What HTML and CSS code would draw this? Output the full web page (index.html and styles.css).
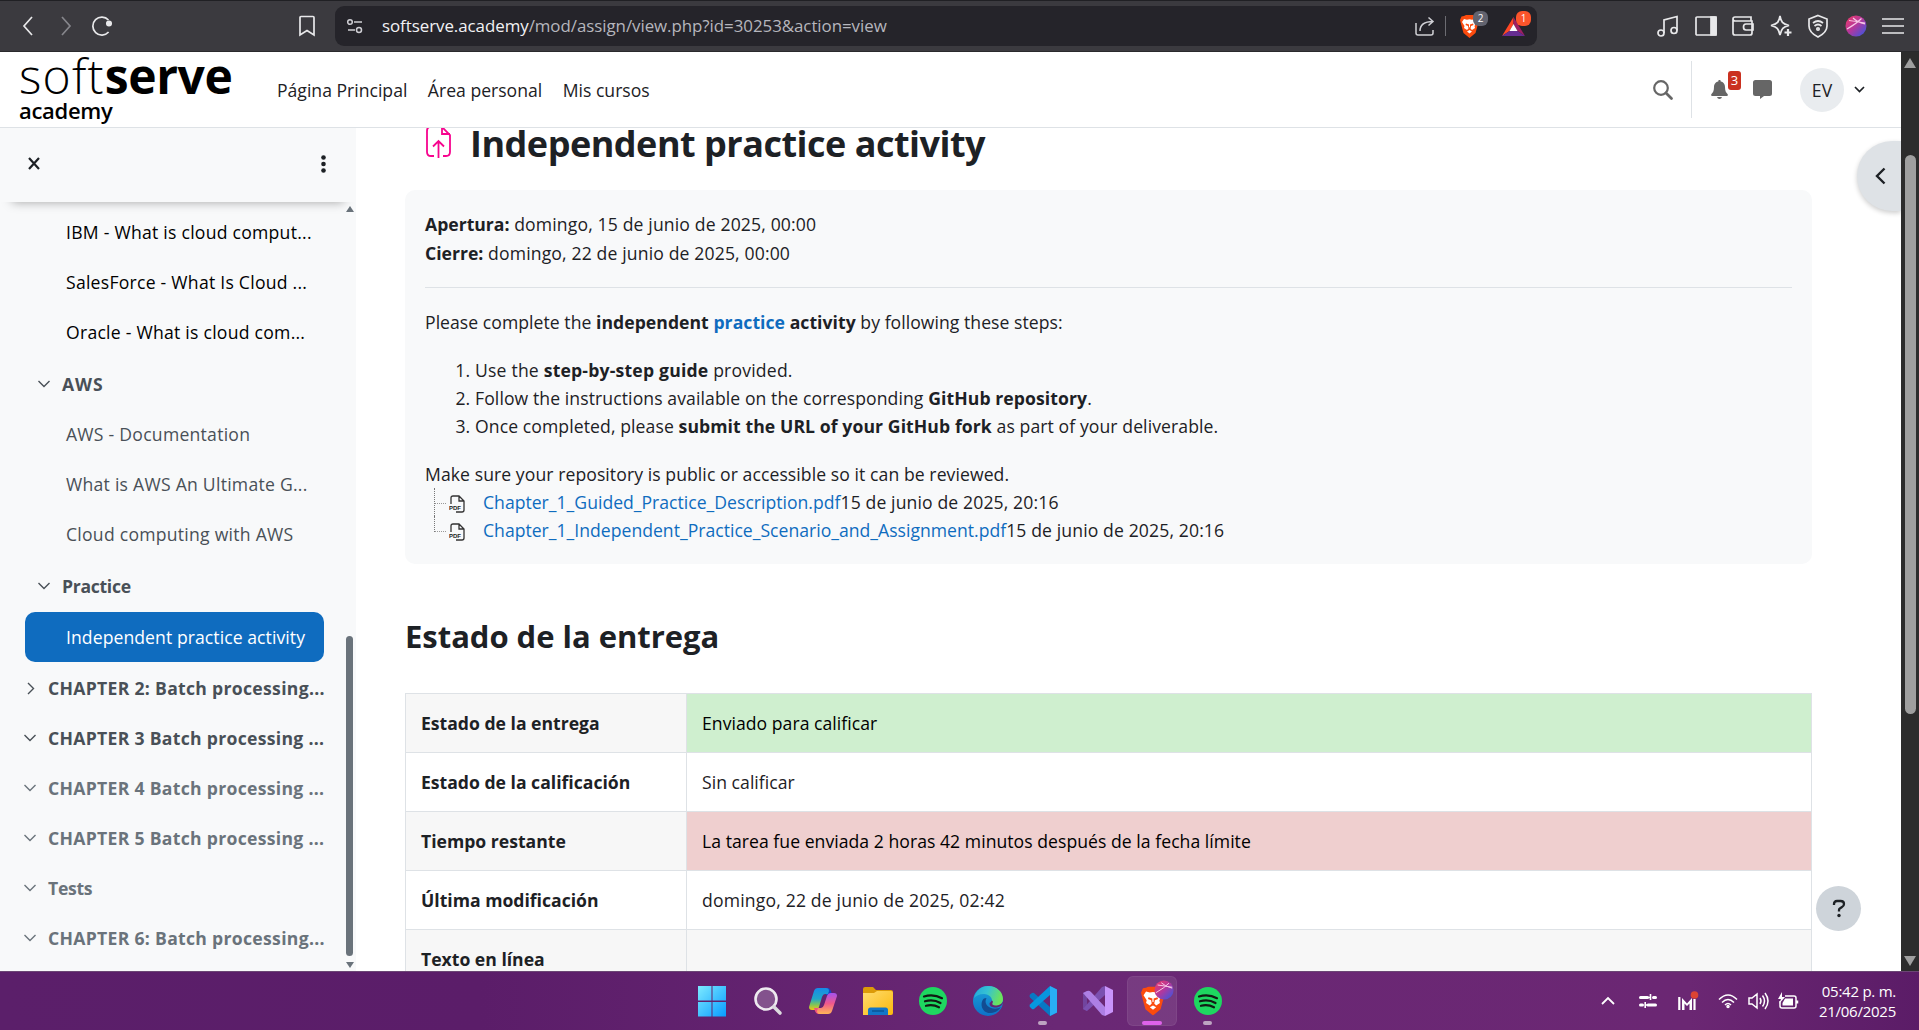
FILE: index.html
```html
<!DOCTYPE html>
<html lang="es">
<head>
<meta charset="utf-8">
<title>Independent practice activity</title>
<link rel="stylesheet" href="styles.css">
</head>
<body>
<div class="screen">
  <div class="browser">
    <div class="nav-btns">
      <svg width="12" height="20" viewBox="0 0 12 20" class="ln"><path d="M10 1 2 10l8 9"/></svg>
      <svg width="12" height="20" viewBox="0 0 12 20" class="ln dim"><path d="M2 1l8 9-8 9"/></svg>
      <svg width="22" height="22" viewBox="0 0 22 22" class="ln reload"><path d="M17.600 17A9 9 0 1 1 17.500 5"/><circle cx="18" cy="8.500" r="2.200" fill="#e8e8ea"/></svg>
    </div>
    <svg class="bookmark ln" width="18" height="22" viewBox="0 0 18 22"><path d="M3 1.500h12a1 1 0 0 1 1 1V20l-7-4.500L2 20V2.500a1 1 0 0 1 1-1Z"/></svg>
    <div class="url">
      <svg width="18" height="18" viewBox="0 0 18 18" class="ln"><circle cx="4" cy="5" r="2.300"/><path d="M8 5h8M2 13h7"/><circle cx="13" cy="13" r="2.500"/></svg>
      <span class="address"><b>softserve.academy</b>/mod/assign/view.php?id=30253&amp;action=view</span>
      <svg class="share ln" width="20" height="20" viewBox="0 0 20 20"><path d="M1 7v10q0 2 2 2h13q2 0 2-2v-3M5 15C5 8 10 5.500 18 5.500M13.500 1.500l4.500 4-4.500 4"/></svg>
      <i class="sep"></i>
      <span class="ext"><svg width="19" height="23" viewBox="0 0 19 23"><use href="#lion"/></svg><em class="n2">2</em></span>
      <span class="ext bat"><svg width="23" height="19" viewBox="0 0 23 19"><path d="M11.500 0 0 19l7.500-5 4-7Z" fill="#ff4724"/><path d="M11.500 0 23 19l-7.500-5-4-7Z" fill="#9e1f63"/><path d="M0 19h23l-7.500-5h-8Z" fill="#662d91"/><path d="m11.500 7 4 7h-8Z" fill="#fff"/></svg><em class="n1">1</em></span>
    </div>
    <div class="tools">
      <svg width="22" height="22" viewBox="0 0 22 22" class="ln"><circle cx="4" cy="18" r="3"/><circle cx="17" cy="15.500" r="3"/><path d="M7 18V5l13-3.500v14M7 9"/></svg>
      <svg width="22" height="22" viewBox="0 0 22 22" class="ln"><rect x="1" y="2" width="20" height="18" rx="1"/><path d="M16 2h5v18h-5Z" fill="#e8e8ea"/></svg>
      <svg width="22" height="22" viewBox="0 0 22 22" class="ln"><path d="M19 6V2H3Q1 2 1 4v14q0 2 2 2h15q2 0 2-2V6H3Q1 6 1 4M21 9h-7q-2.500 0-2.500 3t2.500 3h7Z"/></svg>
      <svg width="22" height="22" viewBox="0 0 22 22" class="ln"><path d="M10 1c1 6 2.500 8 9 9.500-6 1.500-7.500 3-9 9.500-1.500-6.500-3-8-9-9.500C7.500 9 9 7 10 1Z"/><path d="M18 14v7M14.500 17.500h7" stroke-width="2.200"/></svg>
      <svg width="22" height="24" viewBox="0 0 22 24" class="ln"><path d="M11 1.500 20 5v7c0 5-3 8-9 11-6-3-9-6-9-11V5Z"/><path d="M6 9q5-4 10 0M7.500 12q3.500-3 7 0"/><circle cx="11" cy="15" r="1.200"/></svg>
      <svg width="22" height="22" viewBox="0 0 22 22"><use href="#orb"/></svg>
      <svg width="22" height="20" viewBox="0 0 22 20" class="ln"><path d="M0 3h22M0 10h22M0 17h22"/></svg>
    </div>
  </div>

  <div class="page">
    <div class="site">
      <header class="top">
        <div class="logo"><div class="brand"><span>soft</span><b>serve</b></div><div class="acad">academy</div></div>
        <nav><a>Página Principal</a><a>Área personal</a><a>Mis cursos</a></nav>
        <div class="user">
          <svg width="20" height="20" viewBox="0 0 20 20" fill="none" stroke="#666"><circle cx="8" cy="8" r="6.800" stroke-width="2.200"/><path d="m13 13 5.500 5.500" stroke-width="2.800" stroke-linecap="round"/></svg>
          <i class="vline"></i>
          <span class="bell"><svg width="17" height="19" viewBox="0 0 17 19" fill="#666"><path d="M8.500 0c.8 0 1.200.5 1.200 1.400C13 2.200 14 4.500 14 7c0 4 1 5.500 2.500 7 .8.900.4 2-.6 2H1.100c-1 0-1.400-1.100-.6-2C2 12.500 3 11 3 7c0-2.500 1-4.800 4.300-5.600C7.300.5 7.700 0 8.500 0ZM6 17h5q-.5 2-2.500 2T6 17Z"/></svg><em>3</em></span>
          <svg class="chat" width="19" height="19" viewBox="0 0 19 19"><path d="M2.500 0h14Q19 0 19 2.500v11q0 2.500-2.500 2.500H11l-4 3v-3H2.500Q0 16 0 13.500v-11Q0 0 2.500 0Z" fill="#666"/></svg>
          <span class="avatar">EV</span>
          <svg width="11" height="7" viewBox="0 0 11 7" fill="none" stroke="#1d2125" stroke-width="1.700"><path d="m1 1 4.500 4.500L10 1"/></svg>
        </div>
      </header>
      <div class="body">
        <aside>
          <div class="drawer-head">
            <svg width="12" height="13" viewBox="0 0 12 13" stroke="#1d2125" stroke-width="2.200"><path d="m1 1 10 11M11 1 1 12"/></svg>
            <svg width="5" height="18" viewBox="0 0 5 18" fill="#1d2125"><circle cx="2.500" cy="2.500" r="2.300"/><circle cx="2.500" cy="9" r="2.300"/><circle cx="2.500" cy="15.500" r="2.300"/></svg>
          </div>
          <div class="index">
            <ul>
              <li class="item">IBM - What is cloud comput...</li>
              <li class="item">SalesForce - What Is Cloud ...</li>
              <li class="item">Oracle - What is cloud com...</li>
              <li class="sub wide"><svg class="chev"><use href="#down"/></svg>AWS</li>
              <li class="item mut">AWS - Documentation</li>
              <li class="item mut">What is AWS An Ultimate G...</li>
              <li class="item mut">Cloud computing with AWS</li>
              <li class="sub tight"><svg class="chev"><use href="#down"/></svg>Practice</li>
              <li class="item active">Independent practice activity</li>
              <li class="chap"><svg class="chev"><use href="#right"/></svg><span>CHAPTER 2: Batch processing...</span></li>
              <li class="chap"><svg class="chev"><use href="#down"/></svg><span>CHAPTER 3 Batch processing ...</span></li>
              <li class="chap dimmed"><svg class="chev"><use href="#down"/></svg><span>CHAPTER 4 Batch processing ...</span></li>
              <li class="chap dimmed"><svg class="chev"><use href="#down"/></svg><span>CHAPTER 5 Batch processing ...</span></li>
              <li class="chap dimmed tight"><svg class="chev"><use href="#down"/></svg><span>Tests</span></li>
              <li class="chap dimmed"><svg class="chev"><use href="#down"/></svg><span>CHAPTER 6: Batch processing...</span></li>
            </ul>
            <div class="mini-scroll"><i class="up"></i><i class="thumb"></i><i class="dn"></i></div>
          </div>
        </aside>
        <main>
          <div class="title">
            <svg width="25" height="31" viewBox="0 0 25 31" fill="none" stroke="#f7038e" stroke-width="1.800"><path d="M8 29H5q-4 0-4-4V4q0-4 3-4h12l8 8v17q0 4-4 4h-3M16 0v7h8M12.500 31V14M7 19.500l5.500-5.500 5.500 5.500"/></svg>
            <h1>Independent practice activity</h1>
          </div>
          <section class="card">
            <div class="dates"><div><b>Apertura:</b> domingo, 15 de junio de 2025, 00:00</div><div><b>Cierre:</b> domingo, 22 de junio de 2025, 00:00</div></div>
            <p class="lead">Please complete the <b>independent <a>practice</a> activity</b> by following these steps:</p>
            <ol>
              <li class="l1">Use the <b>step-by-step guide</b> provided.</li>
              <li>Follow the instructions available on the corresponding <b>GitHub repository</b>.</li>
              <li>Once completed, please <b>submit the URL of your GitHub fork</b> as part of your deliverable.</li>
            </ol>
            <div class="note">Make sure your repository is public or accessible so it can be reviewed.</div>
            <div class="file"><i class="branch"></i><svg width="16" height="18"><use href="#pdf"/></svg><a>Chapter_1_Guided_Practice_Description.pdf</a><span>15 de junio de 2025, 20:16</span></div>
            <div class="file"><i class="branch"></i><svg width="16" height="18"><use href="#pdf"/></svg><a>Chapter_1_Independent_Practice_Scenario_and_Assignment.pdf</a><span>15 de junio de 2025, 20:16</span></div>
          </section>
          <h2>Estado de la entrega</h2>
          <table>
            <tr><th>Estado de la entrega</th><td class="ok">Enviado para calificar</td></tr>
            <tr><th>Estado de la calificación</th><td>Sin calificar</td></tr>
            <tr><th>Tiempo restante</th><td class="late">La tarea fue enviada 2 horas 42 minutos después de la fecha límite</td></tr>
            <tr><th>Última modificación</th><td class="when">domingo, 22 de junio de 2025, 02:42</td></tr>
            <tr><th>Texto en línea</th><td></td></tr>
          </table>
        </main>
      </div>
      <div class="drawer-toggle"><svg width="11" height="18" viewBox="0 0 11 18" fill="none" stroke="#1d2125" stroke-width="2.400"><path d="M9.500 1.500 2 9l7.500 7.500"/></svg></div>
      <div class="help"><svg width="14" height="19" viewBox="0 0 14 19" fill="none" stroke="#1d2125" stroke-width="2.300"><path d="M2 6V5q0-3 3-3h3.500Q12 2 12 5q0 2-2 3L7.800 9.500Q7 10 7 11v1.500"/><circle cx="7" cy="16.500" r="1.700" fill="#1d2125" stroke="none"/></svg></div>
    </div>
    <div class="page-scroll"><i class="up"></i><i class="thumb"></i><i class="dn"></i></div>
  </div>

  <footer class="taskbar">
    <div class="apps">
      <span class="app start"><svg width="30" height="31" viewBox="0 0 30 31" fill="url(#win)"><path d="M1 0h13.500v14.500H1ZM15.500 0H29v14.500H15.500ZM1 16h13.500v14.500H1ZM15.500 16H29v14.500H15.500Z"/></svg></span>
      <span class="app"><svg width="30" height="30" viewBox="0 0 30 30"><circle cx="13" cy="13" r="10.500" fill="#83528d" stroke="#eeeaf0" stroke-width="2.600"/><path d="m21 21 6 6" stroke="#dcdade" stroke-width="3.600" stroke-linecap="round"/></svg></span>
      <span class="app"><svg width="30" height="30" viewBox="0 0 30 30"><path d="M18 2h2q2 0 3 3l1 4h-6Z" fill="#1746c4"/><path d="M6 5q1-3 4-3h8q3 0 3 3l-1 3h-3q-2 0-3 3l-3 10q-1 3-4 3H4q-3 0-3-3Z" fill="url(#copA)"/><path d="M12 28h-2q-2 0-3-3l-1-3h7Z" fill="#f0527c"/><path d="M24 25q-1 3-4 3h-8q-3 0-3-3l1-3h3q2 0 3-3l3-9q1-3 4-3h3q3 0 3 3Z" fill="url(#copB)"/></svg></span>
      <span class="app"><svg width="32" height="30" viewBox="0 0 32 30"><path d="M1 3q0-2 2-2h8l3 3h15q2 0 2 2v6H1Z" fill="#dc9b08"/><path d="M1 7h11l3-2h14q2 0 2 2v20q0 2-2 2H1Z" fill="url(#folder)"/><path d="M6 29v-5q0-2.500 2.500-2.500h15Q26 21.500 26 24v5Z" fill="#1276c8"/><path d="M10 25h12" stroke="#08518f" stroke-width="1.300"/></svg></span>
      <span class="app"><svg width="30" height="30"><use href="#spotify"/></svg></span>
      <span class="app"><svg width="30" height="30" viewBox="0 0 30 30"><circle cx="15" cy="15" r="15" fill="url(#edgeB)"/><path d="M1 12C3 4 9 0 15 0c9 0 15 6 15 13 0 5-4 7-8 7-3 0-4.500-1.200-3-3.500C20 12 16 8 11 8 6 8 3 10 1 12Z" fill="url(#edgeG)"/><path d="M11 12.500C6 17 9 28 18 27c5-.5 8-3 10-6-3 2-7 2-10 1-4-1.500-7-5-4.500-10Z" fill="#134c91"/><path d="M30.500 14c0 5-4 7.500-8 7.500-3 0-6-1-6-4 0-1 2-1.500 2-3 1 0 2 1 1 2.500-.8 1.500.5 2.500 3 2.500 4 0 7-1.500 8-5.500Z" fill="#652472"/></svg></span>
      <span class="app run"><svg width="30" height="30" viewBox="0 0 30 30"><path d="m22 0 7 3.500v23L22 30 2 11.500q-1-1.500 0-3L4 7q1-.5 2 0l16 14Z" fill="#0878c4"/><path d="M22 9 6 23q-1 .5-2 0l-2-2q-1-1 0-2.500L22 0Z" fill="#0797df"/><path d="m22 0 7 3.500v23L22 30Z" fill="#29aef5"/></svg></span>
      <span class="app"><svg width="30" height="30" viewBox="0 0 30 30"><path d="M0 7 4 5v20l-4-2Z" fill="#71459e"/><path d="M4 25 0 23 19 1l3-1v9Z" fill="#7b50b0"/><path d="M4 5 0 7l19 22 3 1v-9L8 6Q6 4 4 5Z" fill="#ad7fe4"/><path d="m22 0 8 4v22l-8 4Z" fill="#c994fb"/></svg></span>
      <span class="app current"><svg width="24" height="30" viewBox="0 0 19 23"><use href="#lion"/></svg><svg class="profile" width="20" height="20" viewBox="0 0 22 22"><use href="#orb"/></svg></span>
      <span class="app run"><svg width="30" height="30"><use href="#spotify"/></svg></span>
    </div>
    <div class="tray">
      <svg class="k1" width="14" height="10" viewBox="0 0 14 10"><path d="m1 8 6-6 6 6" stroke-width="1.800"/></svg>
      <svg class="k2" width="18" height="16" viewBox="0 0 18 16"><path d="M1.500 4.500h7M14.500 4.500h2M1.500 12h2M9 12h7.500" stroke-width="3" stroke-linecap="round"/><path d="M11.500 1v6M6.200 9v6M8 4.500h4M6 12h4" stroke-width="1.600"/></svg>
      <svg class="k3" width="21" height="20" viewBox="0 0 21 20"><path d="M2.300 6v13M17.500 8v11" stroke-width="2.200"/><path d="M5 19V7l5 5.500L15 7v12h-2.500v-6.500L10 15l-2.500-2.500V19Z" fill="#fff" stroke="none"/><circle cx="17.500" cy="4" r="3.800" fill="#dc4433" stroke="none"/></svg>
      <svg class="k4" width="20" height="16" viewBox="0 0 20 16"><path d="M1 6.500q9-9 18 0M4 9.500q6-6 12 0M7 12q3-3 6 0"/><circle cx="10" cy="13.500" r="1"/></svg>
      <svg class="k5" width="21" height="18" viewBox="0 0 21 18"><path d="M1 6h3l5-4v14l-5-4H1ZM12 6q2 3 0 6M14.500 3.500q4 5.500 0 11M17 1q6 8 0 16"/></svg>
      <svg class="k6" width="21" height="18" viewBox="0 0 21 18"><path d="M7 4h9q2 0 2 2v8q0 2-2 2H4q-2 0-2-2V9M19.500 8.500v3"/><path d="M7 6.500h8v7H4.500V11Z" fill="#fff" stroke="none"/><path d="M4 0 0 7h3L1 12l6-7H4Z" fill="#fff" stroke="none"/></svg>
      <div class="clock"><span>05:42 p. m.</span><span>21/06/2025</span></div>
    </div>
  </footer>
</div>

<svg width="0" height="0" class="defs">
  <defs>
    <linearGradient id="win" x2="1" y2="1"><stop stop-color="#7deaff"/><stop offset="1" stop-color="#079bff"/></linearGradient>
    <linearGradient id="copA" x2="0" y2="1"><stop stop-color="#178be8"/><stop offset=".5" stop-color="#22a7c8"/><stop offset=".75" stop-color="#7cc45c"/><stop offset="1" stop-color="#f2c811"/></linearGradient>
    <linearGradient id="copB" x2="0" y2="1"><stop stop-color="#a452f0"/><stop offset=".5" stop-color="#f0588c"/><stop offset="1" stop-color="#ffb657"/></linearGradient>
    <linearGradient id="folder" x2="1" y2="1"><stop stop-color="#ffdc6e"/><stop offset="1" stop-color="#fbb90e"/></linearGradient>
    <linearGradient id="edgeB" x2="0" y2="1"><stop stop-color="#1ba4d8"/><stop offset="1" stop-color="#0e71c8"/></linearGradient>
    <linearGradient id="edgeG" x2="1" y2=".3"><stop stop-color="#22a5dc"/><stop offset=".5" stop-color="#36c2d3"/><stop offset="1" stop-color="#6be35c"/></linearGradient>
    <linearGradient id="orbG" x2="1" y2="1"><stop stop-color="#f23a64"/><stop offset=".5" stop-color="#b0389f"/><stop offset="1" stop-color="#2c5ae8"/></linearGradient>
    <symbol id="down" viewBox="0 0 14 14"><path d="m1.500 4 5.500 5.500L12.500 4" fill="none" stroke="currentColor" stroke-width="1.400"/></symbol>
    <symbol id="right" viewBox="0 0 14 14"><path d="m5 2 5.500 5.500L5 13" fill="none" stroke="currentColor" stroke-width="1.400"/></symbol>
    <symbol id="lion" viewBox="0 0 19 23"><path d="m4 1 2-1h7l2 1 2.500.5L19 5l-1 4-2.500 9-6 5-6-5L1 9 0 5l1.500-3.500Z" fill="#fb4b0e"/><path d="m4 4 3 .8 2.500-.5 2.500.5L15 4l2 3-2.500 4 .5 2-3 2-1.500-1.500L11 11l2.500-1-.5-1.500-3 1v2.500l-.5.500-.5-.5V9.500l-3-1-.5 1.500L8 11l.5 2.500L7 15l-3-2 .5-2L2 7Zm5.500 11 2.500 1.500-2.500 2-2.500-2Z" fill="#fff"/></symbol>
    <symbol id="orb" viewBox="0 0 22 22"><circle cx="11" cy="11" r="10.500" fill="url(#orbG)"/><path d="M4 5.500q8 1 16 2.500M2 14Q11 9 16.500 3.500M8 3q4 4 12 6" fill="none" stroke="#f7c6e6" stroke-width="1.100"/></symbol>
    <symbol id="pdf" viewBox="0 0 16 18"><path d="M2 9V3q0-2 2-2h6l5 5v9q0 2-2 2H7M10 1v5h5" fill="none" stroke="#333" stroke-width="1.300"/><text x="0" y="14.500" class="pdf-tag">PDF</text></symbol>
    <symbol id="spotify" viewBox="0 0 30 30"><circle cx="15" cy="15" r="14" fill="#1ed760"/><path d="M6 10.500q9.500-2.800 18 1.700M7 15.300q8.500-2.300 15.500 1.700M8 19.800q7-1.700 13 1.500" fill="none" stroke="#121a14" stroke-width="2.200" stroke-linecap="round"/></symbol>
  </defs>
</svg>
</body>
</html>
```
FILE: styles.css
```css
* { box-sizing: border-box; }
body { margin: 0; overflow: hidden; font-family: "Open Sans", "Noto Sans", sans-serif; font-size: 17.6px; line-height: 28.125px; color: #1d2125; background: #fff; }
svg { display: block; flex: none; overflow: visible; }
ul { list-style: none; margin: 0; padding: 0; }
em, i { font-style: normal; }
a { color: #0f6cbf; }
.defs { position: absolute; }
.screen { width: 1919px; height: 1030px; display: flex; flex-direction: column; overflow: hidden; }

/* Browser toolbar */
.browser { height: 52px; flex: none; display: flex; align-items: center; background: #3b3a3f; border-top: 1px solid #202024; border-bottom: 1px solid #29292c; padding-left: 22px; }
.ln { fill: none; stroke: #e8e8ea; stroke-width: 1.7; }
.dim { stroke: #86868c; }
.nav-btns { display: flex; align-items: center; gap: 26px; width: 276px; }
.reload { margin-left: -7px; }
.bookmark { margin-right: 19px; }
.url { width: 1202px; height: 40px; border-radius: 9px; background: #25242a; display: flex; align-items: center; padding-left: 11px; color: #b6b6bd; font-size: 16.9px; }
.url > .ln { stroke: #cfcfd4; stroke-width: 1.5; }
.address { margin-left: 18px; flex: 1; letter-spacing: -.05px; }
.address b { font-weight: 400; color: #f2f2f4; }
.sep { width: 1px; height: 20px; background: #6c6c72; margin: 0 14px 0 10px; }
.ext { position: relative; margin-right: 23px; }
.ext.bat { margin-right: 12px; }
.ext em { position: absolute; top: -4px; left: 13px; width: 15px; height: 15px; border-radius: 6px; background: #62636f; color: #fff; font-size: 10px; line-height: 15px; text-align: center; }
.ext .n1 { background: #fb542b; left: 14px; top: -6px; }
.tools { display: flex; align-items: center; gap: 15.5px; margin-left: 120px; }

/* Site */
.page { height: 919px; flex: none; display: flex; }
.site { width: 1901px; position: relative; display: flex; flex-direction: column; }
.top { height: 76px; flex: none; border-bottom: 1px solid #dee2e6; display: flex; align-items: center; padding: 0 36px 0 19px; }
.logo { width: 258px; color: #000; align-self: flex-start; }
.brand { font-size: 48px; line-height: 47px; height: 44px; display: flex; }
.brand span { font-weight: 350; letter-spacing: 1.2px; }
.brand b { font-weight: 700; letter-spacing: -.4px; }
.acad { font-size: 22px; line-height: 28px; font-weight: 600; letter-spacing: -.3px; }
nav { display: flex; flex: 1; gap: 20.5px; padding-top: 2px; }
nav a { color: #1d2125; }
.user { display: flex; align-items: center; height: 100%; }
.vline { width: 1px; height: 57px; background: #dee2e6; margin: 0 19px 0 18px; }
.bell { position: relative; }
.bell em { position: absolute; left: 17px; top: -9px; width: 13px; height: 19px; border-radius: 3px; background: #ca3120; color: #fff; font-size: 13px; line-height: 19px; text-align: center; }
.chat { margin: 0 28px 0 25px; }
.avatar { width: 44px; height: 44px; border-radius: 50%; background: #e9ecef; line-height: 45px; text-align: center; margin-right: 10px; }
.body { height: 843px; display: flex; overflow: hidden; }

/* Course index */
aside { width: 356px; background: #f8f9fa; display: flex; flex-direction: column; overflow: hidden; }
.drawer-head { height: 74px; flex: none; display: flex; justify-content: space-between; padding: 29px 30px 0 28px; background: #f8f9fa; box-shadow: 0 12px 10px -12px rgba(0,0,0,.35); z-index: 1; }
.drawer-head svg:last-child { margin-top: -2px; }
.index { flex: 1; display: flex; padding: 5px 2px 0 25px; }
.index ul { width: 299px; }
.index li { height: 50px; display: flex; align-items: center; white-space: nowrap; }
.item { padding-left: 41px; color: #000; letter-spacing: .25px; }
.item.mut { color: #495057; }
.index .sub { height: 52px; padding-top: 2px; padding-left: 14px; gap: 11px; font-weight: 700; color: #495057; }
.index .active { background: #0f6cbf; color: #fff; border-radius: 10px; margin: 1px 0; letter-spacing: .07px; }
.chap { gap: 11px; font-weight: 700; color: #495057; letter-spacing: .3px; }
.dimmed { color: #6a737b; }
.wide { letter-spacing: .9px; }
.tight { letter-spacing: -.3px; }
.chev { width: 14px; height: 14px; margin-left: -2px; }
.mini-scroll { width: 7px; margin-left: 22px; display: flex; flex-direction: column; justify-content: space-between; align-items: center; margin-top: -1px; padding-bottom: 3px; }
.mini-scroll .thumb { width: 7px; height: 320px; border-radius: 4px; background: #6a737b; margin-top: auto; margin-bottom: 6px; }
.up, .dn { border: 4.500px solid transparent; width: 0; height: 0; }
.up { border-bottom: 6px solid #6a737b; border-top: 0; }
.dn { border-top: 6px solid #6a737b; border-bottom: 0; }

/* Activity */
main { width: 1407px; margin-left: 49px; flex: none; }
.title { height: 62px; display: flex; padding-left: 21px; gap: 19px; }
.title svg { margin-top: -1px; }
h1 { margin: -2px 0 0; font-size: 36px; line-height: 36px; letter-spacing: -.5px; white-space: nowrap; }
.card { height: 374px; background: #f8f9fa; border-radius: 10px; padding: 20px; }
.dates { height: 78px; border-bottom: 1px solid #dee2e6; line-height: 29px; }
.dates div { letter-spacing: .14px; }
.dates b { letter-spacing: 0; }
.card p { margin: 20px 0; }
.lead { letter-spacing: .045px; }
ol { margin: 0 0 19px; padding-left: 50px; letter-spacing: .09px; }
.l1 { letter-spacing: .19px; }
.note { letter-spacing: .075px; }
.file { display: flex; align-items: center; height: 28px; }
.file a { letter-spacing: .01px; }
.file span { letter-spacing: .12px; }
.branch { width: 13px; height: 28px; margin: 0 3px 0 9px; border-left: 1px dotted #777; background: linear-gradient(90deg, #999 50%, transparent 0) 0 15px / 2px 1px repeat-x; }
.file:last-child .branch { height: 16px; align-self: flex-start; }
.file svg { margin: 5px 18px 0 -1px; }
.pdf-tag { font: 700 6px "Liberation Sans", sans-serif; fill: #222; }
h2 { margin: 52px 0 37px; font-size: 31px; line-height: 40px; letter-spacing: -.03px; }
table { width: 1407px; border-collapse: collapse; table-layout: fixed; }
th, td { height: 59px; border: 1px solid #dee2e6; padding: 0 15px; text-align: left; letter-spacing: .04px; }
th { width: 281px; letter-spacing: 0; }
tr:nth-child(odd) { background: #f7f7f7; }
td.ok { background: #cfefcf; color: #000; }
td.late { background: #efcfcf; color: #000; }
td.when { letter-spacing: .17px; }

.drawer-toggle { position: absolute; right: 0; top: 89px; width: 44px; height: 70px; border-radius: 35px 0 0 35px; background: #dee2e6; box-shadow: 0 2px 5px rgba(0,0,0,.2); clip-path: inset(-10px 0 -10px -10px); padding: 26px 0 0 18px; }
.help { position: absolute; right: 40px; bottom: 40px; width: 45px; height: 45px; border-radius: 50%; background: #ced4da; display: grid; place-items: center; }
.page-scroll { width: 18px; background: #2c2c2c; display: flex; flex-direction: column; align-items: center; padding: 6px 0 5px; }
.page-scroll .up, .page-scroll .dn { border-left-width: 6px; border-right-width: 6px; }
.page-scroll .up { border-bottom: 10px solid #9f9f9f; }
.page-scroll .dn { border-top: 10px solid #9f9f9f; margin-top: auto; }
.page-scroll .thumb { width: 11px; height: 559px; margin-top: 87px; background: #9f9f9f; border-radius: 6px; }

/* Taskbar */
.taskbar { height: 59px; display: flex; align-items: center; justify-content: space-between; padding: 0 23px 0 685px; border-top: 1px solid #6b4674; background: linear-gradient(90deg, #5b1f6a, #5b1d69 25%, #6a2875 55%, #6b2773 88%, #5b1c67); color: #fff; }
.apps { display: flex; }
.app { width: 55px; height: 58px; display: grid; place-items: center; position: relative; }
.start { padding-right: 2px; }
.run::after, .current::after { content: ""; position: absolute; bottom: 5px; left: 23px; width: 9px; height: 4px; border-radius: 2px; background: #bda4c1; }
.current::before { content: ""; position: absolute; inset: 4px 3px 4px 2px; border-radius: 6px; background: rgba(255,255,255,.09); border: 1px solid rgba(255,255,255,.06); }
.current::after { width: 20px; left: 17px; background: #df62ea; }
.current svg { position: relative; }
.current .profile { position: absolute; left: 29px; top: 8px; }
.tray { display: flex; align-items: center; }
.tray svg { fill: none; stroke: #fff; stroke-width: 1.5; }
.k2 { margin-left: 24px; } .k3 { margin-left: 20px; } .k4 { margin-left: 20px; } .k5 { margin-left: 10px; } .k6 { margin-left: 9px; }
.clock { display: flex; flex-direction: column; text-align: right; font-size: 15px; line-height: 20px; width: 97px; letter-spacing: -.25px; }
```
